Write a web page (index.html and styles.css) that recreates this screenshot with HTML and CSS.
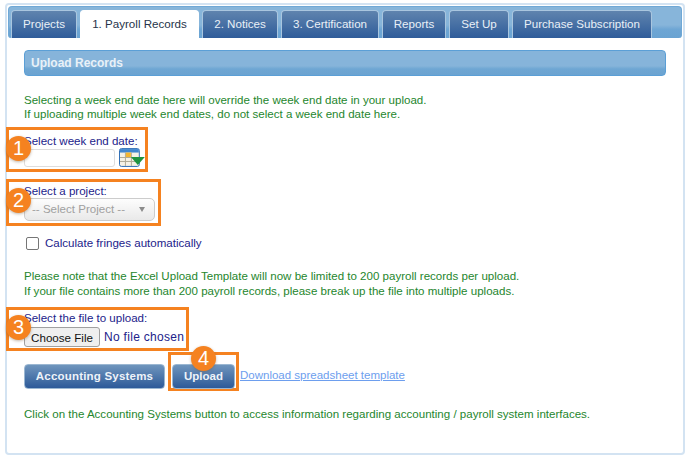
FILE: index.html
```html
<!DOCTYPE html>
<html lang="en">
<head>
<meta charset="utf-8">
<title>Upload Records</title>
<link rel="stylesheet" href="styles.css">
</head>
<body>
<div class="panel">
  <nav class="tabbar">
    <a class="tab">Projects</a>
    <a class="tab active">1. Payroll Records</a>
    <a class="tab">2. Notices</a>
    <a class="tab">3. Certification</a>
    <a class="tab">Reports</a>
    <a class="tab">Set Up</a>
    <a class="tab">Purchase Subscription</a>
  </nav>
  <div class="content">
    <h2 class="section-head">Upload Records</h2>
    <p class="note note-first">Selecting a week end date here will override the week end date in your upload.<br>If uploading multiple week end dates, do not select a week end date here.</p>
    <div class="callout callout-date">
      <span class="badge">1</span>
      <div class="label">Select week end date:</div>
      <div class="date-row">
        <span class="date-input"></span>
        <svg class="cal" width="26" height="20" viewBox="0 0 26 20">
          <rect x="0.5" y="0.5" width="20" height="18" rx="2" fill="#f5f2e6" stroke="#2f6db5"/>
          <rect x="1" y="1" width="19" height="3.5" fill="#3f86cf"/>
          <path d="M1 9.5H20M1 13.5H20M6.5 4.5V18M12.5 4.5V18" stroke="#b0ab96" fill="none"/>
          <rect x="7" y="4.5" width="5" height="4.5" fill="#f2b632"/>
          <path d="M12 9H26L19 17Z" fill="#1f9440"/>
        </svg>
      </div>
    </div>
    <div class="callout callout-project">
      <span class="badge">2</span>
      <div class="label">Select a project:</div>
      <div class="select"><span>-- Select Project --</span><i class="caret"></i></div>
    </div>
    <label class="check-row"><span class="check"></span>Calculate fringes automatically</label>
    <p class="note note-limit">Please note that the Excel Upload Template will now be limited to 200 payroll records per upload.<br>If your file contains more than 200 payroll records, please break up the file into multiple uploads.</p>
    <div class="callout callout-file">
      <span class="badge">3</span>
      <div class="label">Select the file to upload:</div>
      <div class="file-row"><span class="file-btn">Choose File</span><span class="file-name">No file chosen</span></div>
    </div>
    <div class="actions">
      <a class="btn btn-accounting">Accounting Systems</a>
      <div class="callout callout-upload">
        <span class="badge">4</span>
        <a class="btn btn-upload">Upload</a>
      </div>
      <a class="download">Download spreadsheet template</a>
    </div>
    <p class="note note-last">Click on the Accounting Systems button to access information regarding accounting / payroll system interfaces.</p>
  </div>
</div>
</body>
</html>
```
FILE: styles.css
```css
* { box-sizing: border-box; }
html, body { margin: 0; padding: 0; background: #fff; }
body {
  width: 689px;
  height: 458px;
  overflow: hidden;
  padding: 3px 4px 0 5px;
  font-family: "Liberation Sans", Arial, sans-serif;
  font-size: 11.55px;
  line-height: 13px;
}
.panel {
  height: 452px;
  border: 2px solid #d3e3f2;
  border-radius: 4px;
  padding: 1px 1px 0;
  background: #fff;
}
.tabbar {
  display: flex;
  gap: 3px;
  height: 32px;
  padding: 3px 0 0 2px;
  border-radius: 4px 4px 3px 3px;
  background: linear-gradient(#87b5da 0 58%, #6ea6d4 72%, #6aa3d2);
  border: 1px solid #6fa8d6;
  border-bottom: 0;
}
.tab {
  display: flex;
  align-items: center;
  justify-content: center;
  height: 28px;
  padding: 0 0 2px;
  color: #e9f0f7;
  font-size: 11.6px;
  white-space: nowrap;
  border: 1px solid #a9c6df;
  border-bottom: 0;
  border-radius: 4px 4px 0 0;
  background: linear-gradient(#5f84ae, #2f5c9a);
}
.tab.active {
  color: #26344a;
  background: #fff;
  border-color: #fff;
  height: 29px;
  padding-bottom: 3px;
}
.tab:nth-child(1) { width: 66px; }
.tab:nth-child(2) { width: 119px; }
.tab:nth-child(3) { width: 76px; }
.tab:nth-child(4) { width: 98px; }
.tab:nth-child(5) { width: 64px; }
.tab:nth-child(6) { width: 60px; }
.tab:nth-child(7) { width: 140px; }
.content { padding: 12px 16px 0 16px; }
.section-head {
  margin: 0;
  height: 26px;
  padding-left: 6px;
  display: flex;
  align-items: center;
  color: #e8f1f8;
  font-size: 12px;
  font-weight: bold;
  border: 1px solid #5b9fd6;
  border-radius: 4px;
  background: linear-gradient(#86b4da 0 62%, #6ea6d3 75%, #6ba3d1);
}
.note { margin: 0; color: #25862d; line-height: 14px; }
.note-first { margin-top: 17px; }
.callout { position: relative; border: 3px solid #f58220; }
.label { color: #22228a; }
.badge {
  position: absolute;
  width: 25px;
  height: 25px;
  border-radius: 50%;
  background: #f58220;
  color: #fff;
  font-size: 20px;
  line-height: 25px;
  text-align: center;
  box-shadow: 0 1px 3px rgba(120,90,60,.45);
}
.callout-date { width: 142px; height: 45px; margin: 6px 0 0 -18px; padding: 5px 0 0 15px; }
.callout-date .badge { left: -3px; top: 6px; }
.date-row { display: flex; align-items: flex-start; gap: 4px; margin-top: 1px; }
.date-input { width: 92px; height: 18px; border: 1px solid #ddd; border-radius: 3px; background: #fff; }
.cal { margin-top: -1px; }
.callout-project { width: 155px; height: 47px; margin: 7px 0 0 -18px; padding: 3px 0 0 15px; }
.callout-project .badge { left: -3px; top: 6px; }
.select {
  display: flex;
  align-items: center;
  justify-content: space-between;
  width: 131px;
  height: 23px;
  padding: 0 9px 0 7px;
  color: #a0a0a0;
  border: 1px solid #ccc;
  border-radius: 5px;
  background: linear-gradient(#fdfdfd, #e9e9e9);
}
.caret { width: 0; height: 0; border: 3.5px solid transparent; border-top: 5px solid #8b8b8b; border-bottom: 0; }
.check-row { display: flex; align-items: center; margin: 11px 0 0 2px; color: #22228a; height: 13px; }
.check {
  width: 13px;
  height: 13px;
  margin-right: 6px;
  border: 1px solid #767676;
  border-radius: 2px;
  background: #fff;
}
.note-limit { margin-top: 19px; line-height: 14.5px; }
.callout-file { width: 183px; height: 44px; margin: 9px 0 0 -18px; padding: 2px 0 0 15px; }
.callout-file .badge { left: -3px; top: 5px; }
.file-row { display: flex; align-items: center; margin-top: 2px; }
.file-btn {
  width: 76px;
  height: 20px;
  display: flex;
  align-items: center;
  justify-content: center;
  color: #111;
  font-size: 11.6px;
  border: 1px solid #a0a0a0;
  border-radius: 3px;
  background: #efefef;
}
.file-name { margin-left: 4px; color: #22228a; font-size: 12px; white-space: nowrap; letter-spacing: .3px; }
.actions { display: flex; align-items: flex-start; margin-top: 3px; height: 39px; }
.btn {
  display: flex;
  align-items: center;
  justify-content: center;
  height: 25px;
  color: #eef3f9;
  font-weight: bold;
  border: 1px solid #9bb7d2;
  border-radius: 4px;
  background: linear-gradient(#6f95bd, #2d5a99);
}
.btn-accounting { width: 141px; margin-top: 10px; font-size: 11.5px; letter-spacing: .2px; }
.callout-upload { width: 71px; height: 39px; margin: -2px 0 0 3px; padding: 9px 0 0 1px; }
.callout-upload .badge { left: 20px; top: -9px; }
.btn-upload { width: 63px; font-size: 11.5px; }
.download { margin: 15px 0 0 1px; color: #6d9eee; font-size: 11.5px; text-decoration: underline; white-space: nowrap; }
.note-last { margin-top: 14px; }
```
